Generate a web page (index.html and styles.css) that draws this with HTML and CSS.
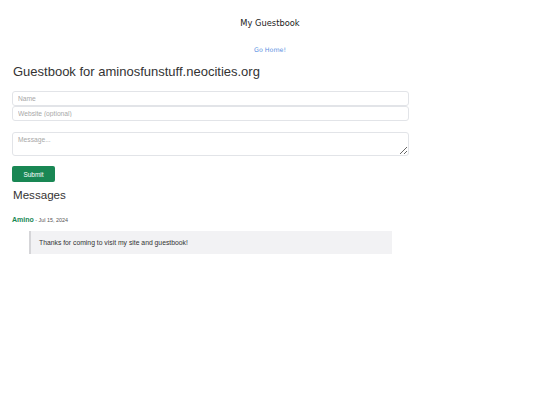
FILE: index.html
```html
<!DOCTYPE html>
<html>
<head>
<meta charset="utf-8">
<link rel="stylesheet" href="styles.css">
</head>
<body>
<header class="top">
  <div class="site-title">My Guestbook</div>
  <a class="home" href="#">Go Home!</a>
</header>
<main class="main">
  <h1 class="title">Guestbook for aminosfunstuff.neocities.org</h1>
  <form class="form">
    <div class="stack">
      <input class="field" type="text" placeholder="Name">
      <input class="field" type="text" placeholder="Website (optional)">
    </div>
    <textarea class="field msg" placeholder="Message..."></textarea>
    <button class="submit" type="button">Submit</button>
  </form>
  <h2 class="heading">Messages</h2>
  <div class="entry">
    <div class="meta"><span class="author">Amino</span><span class="date"> - Jul 15, 2024</span></div>
    <div class="body">Thanks for coming to visit my site and guestbook!</div>
  </div>
</main>
</body>
</html>
```
FILE: styles.css
```css
* { box-sizing: border-box; }
body {
  margin: 0;
  font-family: "Liberation Sans", Arial, sans-serif;
  color: #333;
  background: #fff;
}
.top {
  display: flex;
  flex-direction: column;
  align-items: center;
  padding-top: 17px;
}
.site-title {
  font-family: "DejaVu Sans", Verdana, sans-serif;
  font-size: 8.3px;
  line-height: 12px;
  color: #222;
}
.home {
  font-family: "DejaVu Sans", Verdana, sans-serif;
  font-size: 6.3px;
  line-height: 10px;
  color: #5a90e2;
  text-decoration: none;
  margin-top: 16px;
}
.main {
  padding: 0 12px;
}
.title {
  font-size: 13px;
  font-weight: normal;
  margin: 9px 0 0 1px;
  line-height: 16px;
}
.form {
  display: flex;
  flex-direction: column;
  align-items: flex-start;
  margin-top: 11px;
  width: 397px;
}
.stack {
  display: flex;
  flex-direction: column;
  width: 100%;
}
.field {
  width: 100%;
  height: 15px;
  border: 1px solid #e2e4e8;
  border-radius: 3px;
  font-family: "Liberation Sans", Arial, sans-serif;
  font-size: 6.7px;
  padding: 0 5px;
  margin: 0;
  background: #fff;
}
.field::placeholder { color: #a8a8a8; }
.msg {
  height: 24px;
  margin-top: 11px;
  padding: 3px 5px;
  resize: vertical;
}
.submit {
  margin-top: 10px;
  width: 43px;
  height: 16px;
  border: none;
  border-radius: 2px;
  background: #198754;
  color: #fff;
  font-family: "Liberation Sans", Arial, sans-serif;
  font-size: 6.5px;
  padding: 0;
}
.heading {
  font-size: 11.6px;
  font-weight: normal;
  margin: 1px 0 0 1px;
  line-height: 24px;
}
.entry {
  margin-top: 5px;
}
.meta {
  line-height: 10px;
}
.author {
  color: #198754;
  font-weight: bold;
  font-size: 7px;
}
.date {
  color: #555;
  font-size: 5.4px;
}
.body {
  margin: 6px 0 0 17px;
  width: 363px;
  height: 23px;
  background: #f2f2f4;
  border-left: 2px solid #d5d5d8;
  font-size: 6.8px;
  display: flex;
  align-items: center;
  padding-left: 8px;
}
```
